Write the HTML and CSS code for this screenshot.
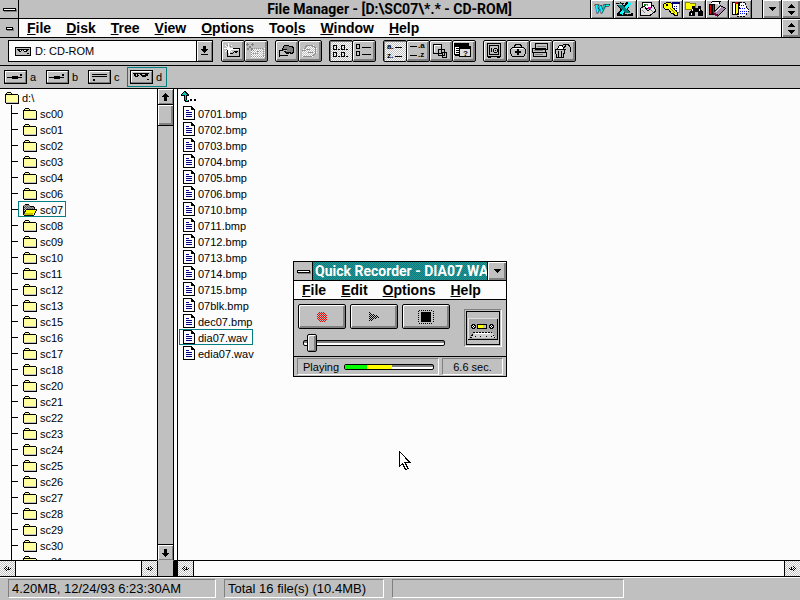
FILE: index.html
```html
<!DOCTYPE html>
<html lang="en">
<head>
<meta charset="utf-8">
<title>File Manager</title>
<link rel="stylesheet" href="styles.css">
</head>
<body>
<svg class="sprites" width="0" height="0" aria-hidden="true">
  <defs>
    <pattern id="p-dark" width="2" height="2" patternUnits="userSpaceOnUse"><path d="M0 0h1v1H0zM1 1h1v1H1z"/></pattern>
    <pattern id="p-red" width="2" height="2" patternUnits="userSpaceOnUse"><path fill="#f00" d="M0 0h1v1H0zM1 1h1v1H1z"/></pattern>
    <pattern id="p-light" width="2" height="2" patternUnits="userSpaceOnUse"><path fill="#fff" d="M0 0h1v1H0zM1 1h1v1H1z"/></pattern>
  </defs>
  <symbol id="folder" viewBox="0 0 14 12">
    <path fill="#ffffa0" d="M1 3h1V1h5v2h6v8H1z"/>
    <path fill="#c0c0c0" d="M1 10h12v1H1z"/>
    <path d="M2 0h4v1H2zM1 1h1v1H1zM6 1h1v1H6zM0 2h13v1H0zM0 3h1v8H0zM13 3h1v9h-1zM1 11h12v1H1z"/>
  </symbol>
  <symbol id="folder-open" viewBox="0 0 15 12">
    <path fill="#fff" d="M1 1h5l1 1h5v5H1z"/>
    <path fill="url(#p-dark)" d="M0 1h7v1h5v4H4l-3 5H0z"/>
    <path d="M2 0h4v1H2zM0 2h1v9H0zM7 2h5v1H7zM12 3h1v2h-1z"/>
    <path fill="#ff0" d="M4 6h10l-3 5H1z"/>
    <path fill="#c0c000" d="M2 9h9v2H1z"/>
    <path fill="none" stroke="#000" d="M.5 10.500l3-5h11l-3 6H1"/>
  </symbol>
  <symbol id="doc" viewBox="0 0 12 14">
    <path fill="#fff" stroke="#000" d="M.5.5h8l3 3v10H.5z"/>
    <path d="M8 0h1v1h1v1h1v1h1v1H8zM11 3h1v11h-1zM0 13h12v1H0z"/>
    <path fill="#000080" d="M3 4h3v1H3zM3 6h6v1H3zM3 8h6v1H3zM3 10h6v1H3z"/>
  </symbol>
  <symbol id="arrow-down" viewBox="0 0 7 8"><path d="M2 0h3v4h2v1H6v1H5v1H4v1H3V7H2V6H1V5H0V4h2z"/></symbol>
  <symbol id="arrow-up" viewBox="0 0 7 8"><path d="M2 8h3V4h2V3H6V2H5V1H4V0H3v1H2v1H1v1H0v1h2z"/></symbol>
  <symbol id="arrow-left" viewBox="0 0 7 6"><path fill="url(#p-dark)" d="M0 3l3-3v2h4v2H3v2z"/><path d="M0 2h1v1H0zM1 1h1v1H1zM2 0h1v1H2zM1 3h1v1H1zM2 4h1v1H2zM4 1h1v1H4zM4 3h1v1H4z"/></symbol>
  <symbol id="tri-down" viewBox="0 0 7 4"><path d="M0 0h7v1H6v1H5v1H4v1H3V3H2V2H1V1H0z"/></symbol>
  <symbol id="restore" viewBox="0 0 7 11"><path d="M3 0h1v1h1v1h1v1h1v1H0V3h1V2h1V1h1zM0 7h7v1H6v1H5v1H4v1H3v-1H2V9H1V8H0z"/></symbol>
  <symbol id="cd" viewBox="0 0 16 9">
    <path fill="#c0c0c0" stroke="#000" d="M.5.5h15v8H.5z"/>
    <path d="M2 2h12v1h-1v1h-1v1H9V4H8V3H7v1H6v1H4V4H3V3H2zM12 6h2v1h-2z"/>
    <path fill="#fff" d="M5 3h1v1H5zM9 3h2v1H9z"/>
  </symbol>
  <symbol id="drive-frame" viewBox="0 0 24 14"><path fill="#c0c0c0" stroke="#000" d="M.5.5h22v13H.5z"/><path fill="#fff" d="M1 1h20v1H2v10H1z"/><path fill="#808080" d="M21 2h1v11H1v-1h20z"/></symbol>
</svg>

<header class="titlebar">
  <button class="sysbox" aria-label="Control menu"><i class="bar"></i></button>
  <h1>File Manager - [D:\SC07\*.* - CD-ROM]</h1>
  <div class="launcher">
    <button aria-label="Word"><svg width="20" height="16" viewBox="0 0 20 16"><text class="logo-w" x="2" y="12">W</text><path fill="#0ff" stroke="#000" stroke-width=".5" d="M13 3h5l-1 2h-4z"/></svg></button>
    <button aria-label="Excel"><svg width="20" height="16" viewBox="0 0 20 16"><path fill="none" stroke="#000" stroke-width="5" d="M14 2L5 13M4 3l10 10"/><path d="M1 2h8v1H1zM2 12h16v3H2z"/><path fill="none" stroke="#0ff" stroke-width="3" d="M15 2L6 13"/><path fill="none" stroke="#008080" stroke-width="3" d="M4 3l10 10"/><path stroke="#c0c0c0" d="M3 3.500h4M10 12.500h6"/></svg></button>
    <button aria-label="Mail"><svg width="20" height="16" viewBox="0 0 20 16"><path fill="#fff" stroke="#000" d="M4.500 1.500h9v6h-9z"/><path fill="#e0e0e0" stroke="#000" d="M2 8l4-3 4 5 5-6 3 6-7 5-5-1-4 1z"/><path fill="none" stroke="#808080" d="M4 9l3 3M12 8l3 3M7 3h2v2"/><path fill="#c0a" d="M10 6h3v2h-3z"/><path fill="#080" d="M6 3h2v2H6z"/></svg></button>
    <button aria-label="Security"><svg width="20" height="16" viewBox="0 0 20 16"><path fill="#fff" stroke="#808080" d="M11.500 2.500h7v9h-7z"/><path fill="#000080" d="M11 1h8v2h-8z"/><path stroke="#008" stroke-dasharray="1 1" d="M13 5h4M13 7h4M13 9h4"/><path fill="#ff0" stroke="#000" d="M2.500 3.500l3-2h4l2 2v3l5 5v3h-3l-1-2h-2l-3-4h-3l-2-2z"/><path d="M5 3h2v2H5z"/><path stroke="#880" d="M9 7l5 5"/></svg></button>
    <button aria-label="Find file"><svg width="20" height="16" viewBox="0 0 20 16"><path fill="#ff0" stroke="#880" d="M1.500 8.500v-7h4l1 1h5v6z"/><path d="M8 5h3v2h3V5h3v3l2 3v4h-5v-4h-3v4H5v-4l3-3z"/><path fill="#fff" d="M8 8h1v2H8zM15 8h1v2h-1zM7 12h1v2H7z"/></svg></button>
    <button aria-label="Library"><svg width="20" height="16" viewBox="0 0 20 16"><path fill="#fff" stroke="#000" d="M3.500 2.500l2-2h8l-2 3"/><path fill="#d00" stroke="#000" d="M2.500 3.500h2v10h-2z"/><path fill="#080" stroke="#000" d="M5.500 3.500h2v10h-2z"/><path fill="#a8a" stroke="#000" d="M6.500 11.500l7-7 5 3-7 7z"/><path stroke="#fff" d="M9 11l5-5"/><path stroke="#804" stroke-width="2" d="M6 12l5 3"/></svg></button>
    <button aria-label="Notes"><svg width="20" height="16" viewBox="0 0 20 16"><path fill="#fff" stroke="#000" d="M2.500 1.500h7v12h-7z"/><path fill="#ff0" stroke="#000" d="M5.500 1.500h3v11l-2 1-1-1z"/><path fill="#d00" d="M5 1h3v2H5z"/><path fill="#fff" stroke="#000" stroke-dasharray="2 1" d="M10 2l5-1 1 4 3 5-4 5H8l1-6z"/><path stroke="#00f" stroke-dasharray="1 1" d="M11 4h4M10 7h6M10 10h7M10 12h5"/></svg></button>
  </div>
  <div class="winbuttons">
    <button class="winbtn" aria-label="Minimize"><svg width="7" height="4"><use href="#tri-down"/></svg></button>
    <button class="winbtn" aria-label="Restore"><svg width="7" height="11"><use href="#restore"/></svg></button>
  </div>
</header>

<nav class="menubar">
  <button class="sysbox" aria-label="Document control menu"><i class="bar short"></i></button>
  <ul class="menu">
    <li><a href="#"><u>F</u>ile</a></li><li><a href="#"><u>D</u>isk</a></li><li><a href="#"><u>T</u>ree</a></li><li><a href="#"><u>V</u>iew</a></li><li><a href="#"><u>O</u>ptions</a></li><li><a href="#">Too<u>l</u>s</a></li><li><a href="#"><u>W</u>indow</a></li><li><a href="#"><u>H</u>elp</a></li>
  </ul>
  <button class="winbtn" aria-label="Restore document"><svg width="7" height="11"><use href="#restore"/></svg></button>
</nav>

<div class="toolbar">
  <div class="drive-select">
    <svg width="16" height="9" aria-hidden="true"><use href="#cd"/></svg>
    <select aria-label="Drive"><option>D: CD-ROM</option></select>
    <span class="drop"><svg width="7" height="10" viewBox="0 0 7 10"><path d="M2 0h3v3h2v1H6v1H5v1H4v1H3V6H2V5H1V4H0V3h2zM0 8h7v1H0z"/></svg></span>
  </div>
  <div class="group">
    <button aria-label="Connect network drive"><svg viewBox="1 1 22 20"><path fill="#c0c0c0" stroke="#000" d="M6.500 8.500h12v8h-12z"/><path d="M7 16h12v1H7zM18 9h1v8h-1z"/><path fill="none" stroke="#fff" d="M8 15V9.500h10"/><path d="M9 13h3v1H9zM12 12h1v1h-1zM13 11h4v1h-4zM14 12h2v1h-2z"/><path stroke="#fff" d="M7.500 3v10M3 8.500h9M4 5l7 7M11 5l-7 7"/><path fill="#808080" d="M6 5h1v1H6zM9 6h1v1H9zM5 9h1v1H5z"/></svg></button>
    <button aria-label="Disconnect network drive"><svg viewBox="1 1 22 20"><path fill="url(#p-light)" d="M7 8h14v10H7z"/><path fill="none" stroke="#909090" stroke-dasharray="1 1" d="M7.500 8.500h12v8h-12zM9 13.500h4l1-2h4"/><path stroke="#808080" stroke-width="2" stroke-dasharray="2 1" d="M3 4l7 7M9 4L3 10"/></svg></button>
  </div>
  <div class="group">
    <button aria-label="Share directory"><svg viewBox="1 1 22 20"><path fill="#808080" stroke="#000" d="M7.500 8.500l2-3h4l1 1h3l1 2v4l-2 1h-8z"/><path fill="#c0c0c0" d="M4 11h4l2-2h2v2h-1v1h4v2h-3v2H4z"/><path fill="none" stroke="#000" d="M4 10.500h4M8 9.500h4M11 11.500h-2M10 12.500h6M14 13.500h-3M5 15.500h8"/><path d="M4 11h1v6H4z"/></svg></button>
    <button aria-label="Stop sharing"><svg viewBox="1 1 22 20"><path fill="url(#p-light)" d="M4 11l4-6h7l4 4v5l-4 3H4z"/><path fill="none" stroke="#909090" d="M6.500 9.500l2-4h5l4 2v6l-4 3h-9M4 10.500h4M8 9.500h4M10 12.500h5"/></svg></button>
  </div>
  <div class="group">
    <button class="on" aria-label="View name" aria-pressed="true"><svg viewBox="1 1 22 20"><path fill="none" stroke="#000" d="M4.500 5.500h3v4h-3zM4.500 12.500h3v4h-3zM12.500 5.500h3v4h-3zM12.500 12.500h3v4h-3zM9 9.500h2M17 9.500h2M9 16.500h2M17 16.500h2"/></svg></button>
    <button aria-label="View all details"><svg viewBox="1 1 22 20"><path fill="none" stroke="#000" d="M4.500 4.500h3v4h-3zM4.500 11.500h3v4h-3zM10 7.500h9M10 14.500h9"/></svg></button>
  </div>
  <div class="group">
    <button class="on" aria-label="Sort by name" aria-pressed="true"><svg viewBox="1 1 22 20"><text x="4" y="9">a.</text><text x="4" y="18">z.</text><path stroke="#000" d="M12 7.500h7M12 16.500h7"/></svg></button>
    <button aria-label="Sort by type"><svg viewBox="1 1 22 20"><text x="12" y="8">.a</text><text x="12" y="17">.z</text><path stroke="#000" d="M4 6.500h7M4 15.500h7"/></svg></button>
    <button aria-label="Sort by size"><svg viewBox="1 1 22 20"><g fill="#c0c0c0" stroke="#000"><path d="M4.500 4.500h8v9h-8zM9.500 9.500h6v6h-6zM13.500 12.500h4v5h-4z"/></g><path fill="none" stroke="#fff" d="M5.500 12V5.500H12"/></svg></button>
    <button aria-label="Sort by date"><svg viewBox="1 1 22 20"><path fill="#fff" stroke="#000" d="M2.500 4.500h14v10h-14z"/><path d="M2 3h15v4H2zM4 8h3v1H4zM4 10h3v1H4zM4 12h3v1H4zM3 14h5v2H3z"/><path fill="#e0e0e0" stroke="#000" d="M7.500 6.500h11v10h-11z"/><path d="M7 6h12v3H7z"/><text x="11" y="16">?</text></svg></button>
  </div>
  <div class="group">
    <button aria-label="Backup"><svg viewBox="1 1 22 20"><g fill="none" stroke="#000"><path d="M4.500 3.500h13v13h-13zM6.500 5.500h9v9h-9zM5 17.500h3M14 17.500h3"/><path d="M8.500 8v4M11 8.500h3M11 12.500h3M10.500 9v3M14.500 9v3M12 10.500h1"/></g></svg></button>
    <button aria-label="Anti-virus"><svg viewBox="1 1 22 20"><path fill="none" stroke="#000" d="M8.500 7V5.500h1v-1h5v1h1V7M6 7.500h12M5.500 8v1M18.500 8v1M4.500 9v5M19.500 9v5M5.500 14v2M18.500 14v2M6 16.500h12"/><path fill="#fff" d="M7 8h10v1H7z"/><path d="M11 9h2v2h2v2h-2v2h-2v-2H9v-2h2z"/></svg></button>
    <button aria-label="Undelete"><svg viewBox="1 1 22 20"><g fill="#c0c0c0" stroke="#000"><path d="M6.500 3.500h12v6h-12zM3.500 8.500h13v4h-13zM4.500 12.500h13v4h-13z"/></g><path fill="none" stroke="#808080" d="M8 6.500h9M5 10.500h9M6 14.500h8"/></svg></button>
    <button aria-label="Recover"><svg viewBox="1 1 22 20"><path fill="#fff" stroke="#000" d="M5.500 9l2-4h3l1 4"/><path fill="#c0c0c0" stroke="#000" d="M3.500 9.500h9l-1 8h-7z"/><path fill="none" stroke="#000" d="M3 9.500h11M6.500 11v6M9.500 11v6M12 8l3-4h1l2 3v5M11 4.500h3"/></svg></button>
  </div>
</div>

<div class="drives">
  <button class="drive"><svg width="24" height="14" viewBox="0 0 24 14"><use href="#drive-frame"/><path d="M3 7h15v1H3zM8 6h6v3H8zM16 4h2v2h-2z"/></svg>a</button>
  <button class="drive"><svg width="24" height="14" viewBox="0 0 24 14"><use href="#drive-frame"/><path d="M3 7h15v1H3zM8 6h6v3H8zM16 4h2v2h-2z"/></svg>b</button>
  <button class="drive"><svg width="24" height="14" viewBox="0 0 24 14"><use href="#drive-frame"/><path d="M4 4h15v1H4zM4 6h15v1H4zM5 9h2v2H5z"/></svg>c</button>
  <button class="drive selected"><svg width="24" height="14" viewBox="0 0 24 14"><use href="#drive-frame"/><path d="M3 3h16v1h-1v2h-2v1h-4V6h-1V5H9v1H8v1H5V6H4V4H3zM17 9h2v1h-2z"/><path fill="#c0c0c0" d="M6 4h1v2H6zM8 4h2v1H8zM12 4h3v1h-3z"/></svg>d</button>
</div>

<main class="panes">
  <section class="pane tree-pane" aria-label="Directory tree">
    <div class="tree">
      <a class="item root" href="#"><svg width="14" height="12"><use href="#folder"/></svg>d:\</a>
      <ul>
        <li><a class="item" href="#"><svg width="14" height="12"><use href="#folder"/></svg>sc00</a></li>
        <li><a class="item" href="#"><svg width="14" height="12"><use href="#folder"/></svg>sc01</a></li>
        <li><a class="item" href="#"><svg width="14" height="12"><use href="#folder"/></svg>sc02</a></li>
        <li><a class="item" href="#"><svg width="14" height="12"><use href="#folder"/></svg>sc03</a></li>
        <li><a class="item" href="#"><svg width="14" height="12"><use href="#folder"/></svg>sc04</a></li>
        <li><a class="item" href="#"><svg width="14" height="12"><use href="#folder"/></svg>sc06</a></li>
        <li><a class="item selected" href="#"><svg width="14" height="12"><use href="#folder-open"/></svg>sc07</a></li>
        <li><a class="item" href="#"><svg width="14" height="12"><use href="#folder"/></svg>sc08</a></li>
        <li><a class="item" href="#"><svg width="14" height="12"><use href="#folder"/></svg>sc09</a></li>
        <li><a class="item" href="#"><svg width="14" height="12"><use href="#folder"/></svg>sc10</a></li>
        <li><a class="item" href="#"><svg width="14" height="12"><use href="#folder"/></svg>sc11</a></li>
        <li><a class="item" href="#"><svg width="14" height="12"><use href="#folder"/></svg>sc12</a></li>
        <li><a class="item" href="#"><svg width="14" height="12"><use href="#folder"/></svg>sc13</a></li>
        <li><a class="item" href="#"><svg width="14" height="12"><use href="#folder"/></svg>sc15</a></li>
        <li><a class="item" href="#"><svg width="14" height="12"><use href="#folder"/></svg>sc16</a></li>
        <li><a class="item" href="#"><svg width="14" height="12"><use href="#folder"/></svg>sc17</a></li>
        <li><a class="item" href="#"><svg width="14" height="12"><use href="#folder"/></svg>sc18</a></li>
        <li><a class="item" href="#"><svg width="14" height="12"><use href="#folder"/></svg>sc20</a></li>
        <li><a class="item" href="#"><svg width="14" height="12"><use href="#folder"/></svg>sc21</a></li>
        <li><a class="item" href="#"><svg width="14" height="12"><use href="#folder"/></svg>sc22</a></li>
        <li><a class="item" href="#"><svg width="14" height="12"><use href="#folder"/></svg>sc23</a></li>
        <li><a class="item" href="#"><svg width="14" height="12"><use href="#folder"/></svg>sc24</a></li>
        <li><a class="item" href="#"><svg width="14" height="12"><use href="#folder"/></svg>sc25</a></li>
        <li><a class="item" href="#"><svg width="14" height="12"><use href="#folder"/></svg>sc26</a></li>
        <li><a class="item" href="#"><svg width="14" height="12"><use href="#folder"/></svg>sc27</a></li>
        <li><a class="item" href="#"><svg width="14" height="12"><use href="#folder"/></svg>sc28</a></li>
        <li><a class="item" href="#"><svg width="14" height="12"><use href="#folder"/></svg>sc29</a></li>
        <li><a class="item" href="#"><svg width="14" height="12"><use href="#folder"/></svg>sc30</a></li>
        <li><a class="item" href="#"><svg width="14" height="12"><use href="#folder"/></svg>sc31</a></li>
      </ul>
    </div>
    <div class="vscroll">
      <button aria-label="Scroll up"><svg width="7" height="8"><use href="#arrow-up"/></svg></button>
      <span class="thumb"></span>
      <button class="end" aria-label="Scroll down"><svg width="7" height="8"><use href="#arrow-down"/></svg></button>
    </div>
    <div class="hscroll">
      <button aria-label="Scroll tree left"><svg width="7" height="6"><use href="#arrow-left"/></svg></button>
      <button aria-label="Scroll tree right"><svg class="flip" width="7" height="6"><use href="#arrow-left"/></svg></button>
    </div>
    <div class="corner"></div>
  </section>
  <div class="splitter"></div>
  <section class="pane file-pane" aria-label="Files">
    <ul class="files">
      <li><a class="item up" href="#" aria-label="Parent directory"><svg width="16" height="12" viewBox="0 0 16 12"><path d="M3 0h2v1h1v1h1v1h1v2H6v4h2v2H4v-1H3V5H0V3h1V2h1V1h1z"/><path fill="#0cc" d="M3 1h1v1h1v1h1v1H5v5h2v1H5V9H4V4H1V3h1V2h1z"/><path d="M9 8h2v2H9zM13 8h2v2h-2z"/></svg></a></li>
      <li><a class="item" href="#"><svg width="12" height="14"><use href="#doc"/></svg>0701.bmp</a></li>
      <li><a class="item" href="#"><svg width="12" height="14"><use href="#doc"/></svg>0702.bmp</a></li>
      <li><a class="item" href="#"><svg width="12" height="14"><use href="#doc"/></svg>0703.bmp</a></li>
      <li><a class="item" href="#"><svg width="12" height="14"><use href="#doc"/></svg>0704.bmp</a></li>
      <li><a class="item" href="#"><svg width="12" height="14"><use href="#doc"/></svg>0705.bmp</a></li>
      <li><a class="item" href="#"><svg width="12" height="14"><use href="#doc"/></svg>0706.bmp</a></li>
      <li><a class="item" href="#"><svg width="12" height="14"><use href="#doc"/></svg>0710.bmp</a></li>
      <li><a class="item" href="#"><svg width="12" height="14"><use href="#doc"/></svg>0711.bmp</a></li>
      <li><a class="item" href="#"><svg width="12" height="14"><use href="#doc"/></svg>0712.bmp</a></li>
      <li><a class="item" href="#"><svg width="12" height="14"><use href="#doc"/></svg>0713.bmp</a></li>
      <li><a class="item" href="#"><svg width="12" height="14"><use href="#doc"/></svg>0714.bmp</a></li>
      <li><a class="item" href="#"><svg width="12" height="14"><use href="#doc"/></svg>0715.bmp</a></li>
      <li><a class="item" href="#"><svg width="12" height="14"><use href="#doc"/></svg>07blk.bmp</a></li>
      <li><a class="item" href="#"><svg width="12" height="14"><use href="#doc"/></svg>dec07.bmp</a></li>
      <li><a class="item selected" href="#"><svg width="12" height="14"><use href="#doc"/></svg>dia07.wav</a></li>
      <li><a class="item" href="#"><svg width="12" height="14"><use href="#doc"/></svg>edia07.wav</a></li>
    </ul>
    <div class="hscroll">
      <button aria-label="Scroll files left"><svg width="7" height="6"><use href="#arrow-left"/></svg></button>
      <button aria-label="Scroll files right"><svg class="flip" width="7" height="6"><use href="#arrow-left"/></svg></button>
    </div>
  </section>
</main>

<footer class="status">
  <p class="well">4.20MB, 12/24/93 6:23:30AM</p>
  <p class="well">Total 16 file(s) (10.4MB)</p>
  <p class="well"></p>
</footer>

<section class="recorder" role="dialog" aria-labelledby="rec-title">
  <header class="rec-title">
    <button class="sysbox" aria-label="Recorder control menu"><i class="bar"></i></button>
    <h2 id="rec-title">Quick Recorder - DIA07.WAV</h2>
    <button class="winbtn" aria-label="Minimize recorder"><svg width="7" height="4"><use href="#tri-down"/></svg></button>
  </header>
  <ul class="menu rec-menu">
    <li><a href="#"><u>F</u>ile</a></li><li><a href="#"><u>E</u>dit</a></li><li><a href="#"><u>O</u>ptions</a></li><li><a href="#"><u>H</u>elp</a></li>
  </ul>
  <div class="rec-body">
    <div class="deck">
      <div class="keys">
        <button aria-label="Record"><svg width="16" height="16" viewBox="0 0 16 16"><circle cx="8" cy="8" r="5.500" fill="url(#p-red)"/></svg></button>
        <button aria-label="Play"><svg width="16" height="16" viewBox="0 0 16 16"><path fill="url(#p-dark)" d="M3 3l11 5L3 13z"/></svg></button>
        <button aria-label="Stop"><svg width="16" height="16" viewBox="0 0 16 16"><path d="M3 3h10v10H3z"/><path fill="none" stroke="#000" stroke-dasharray="1 1" d="M.5 2v12M15.500 2v12M1 1.500h14M1 14.500h14"/></svg></button>
      </div>
      <input class="seek" type="range" min="0" max="100" value="2" aria-label="Position">
    </div>
    <div class="tape"><svg width="34" height="34" viewBox="0 0 34 34">
      <path fill="#c0c0c0" stroke="#000" d="M.5.5h33v33H.5z"/>
      <path fill="#a8a8a8" d="M2 8h30v21H2z"/><path fill="#e0e0e0" d="M2 7h29v1H3v20H2z"/><path d="M31 8h1v21H2v-1h29z"/>
      <path d="M6 13h3v1h1v3H9v1H6v-1H5v-3h1zM24 13h3v1h1v3h-1v1h-3v-1h-1v-3h1z"/>
      <path fill="#fff" d="M7 14h1v1H7zM6 15h1v1H6zM8 15h1v1H8zM7 16h1v1H7zM25 14h1v1h-1zM24 15h1v1h-1zM26 15h1v1h-1zM25 16h1v1h-1z"/>
      <path fill="#c0c0c0" stroke="#000" d="M11.500 13.500h9v4h-9z"/><path fill="#ff0" d="M12 14h5v3h-5z"/>
      <path fill="#d0d0d0" d="M4 27l4-6h18l4 6z"/><path fill="none" stroke="#000" stroke-dasharray="2 1" d="M4.500 27.500l3-6h18l4 6"/><path fill="#fff" d="M9 22h15v1H9z"/><path d="M9 25h1v1H9zM14 25h1v1h-1zM20 25h1v1h-1zM25 25h1v1h-1z"/>
    </svg></div>
  </div>
  <footer class="rec-status">
    <p class="well grow">Playing <span class="meter"><i class="green"></i><i class="yellow"></i></span></p>
    <p class="well time">6.6 sec.</p>
  </footer>
</section>

<svg class="cursor" width="12" height="20" viewBox="0 0 12 20" aria-hidden="true"><path fill="#fff" stroke="#000" d="M.5.5v15l3-3 3 6 2.500-1-3-6h5z"/></svg>
</body>
</html>
```
FILE: styles.css
```css
* { box-sizing: border-box; }

:root {
  --face: #c0c0c0;
  --paper: #fcfcfc;
  --teal: #008080;
  --dither: repeating-conic-gradient(#c0c0c0 0 25%, #fff 0 50%) 0 0 / 2px 2px;
}

body {
  margin: 0;
  height: 100vh;
  display: flex;
  flex-direction: column;
  overflow: hidden;
  background: var(--face);
  color: #000;
  font: 11px/16px "Liberation Sans", Arial, sans-serif;
  cursor: default;
}

h1, h2, p, ul { margin: 0; padding: 0; }
ul { list-style: none; }
a { color: inherit; text-decoration: none; }
svg { display: block; flex: none; shape-rendering: crispEdges; }
.sprites { position: absolute; }

button {
  margin: 0;
  padding: 0;
  border: 0;
  border-radius: 0;
  background: var(--face);
  color: inherit;
  font: inherit;
  display: flex;
  align-items: center;
  justify-content: center;
  flex: none;
}

/* Title and menu bars */
.titlebar, .menubar {
  display: flex;
  flex: none;
  height: 19px;
  border-bottom: 1px solid #000;
}
.titlebar h1 {
  flex: 1;
  padding-left: 170px;
  text-align: center;
  white-space: nowrap;
}
h1, h2, .menu { font-size: 14px; line-height: 18px; font-weight: bold; }
h1, h2 { font-family: Roboto, "Liberation Sans", sans-serif; }

.sysbox { width: 19px; border-right: 1px solid #000; }
.bar {
  width: 13px;
  height: 3px;
  border: 1px solid #000;
  background: #fff;
  box-shadow: 1px 1px #808080;
}
.bar.short { width: 7px; }

.launcher { display: flex; margin-right: 10px; border-right: 1px solid #000; }
.launcher button {
  width: 23px;
  border-left: 1px solid #000;
  box-shadow: inset 1px 1px #fff, inset -1px -1px #808080;
}
.logo-w {
  font: italic bold 13px "Liberation Serif", serif;
  fill: #0ff;
  stroke: #000;
  stroke-width: 1px;
  paint-order: stroke;
}
.winbuttons { display: flex; }
.winbtn {
  width: 19px;
  border-left: 1px solid #000;
  box-shadow: inset 1px 1px #fff, inset -2px -2px #808080;
}

.menubar { background: var(--paper); }
.menu { display: flex; flex: 1; gap: 15px; padding-left: 8px; }

/* Toolbar */
.toolbar {
  display: flex;
  flex: none;
  gap: 7px;
  height: 28px;
  padding: 2px 8px;
  border-bottom: 1px solid #000;
}
.drive-select {
  display: flex;
  align-items: center;
  width: 205px;
  height: 22px;
  margin-right: 1px;
  padding-left: 6px;
  border: 1px solid #000;
  background: var(--paper);
}
.drive-select select {
  appearance: none;
  flex: 1;
  min-width: 0;
  padding: 0 4px;
  border: 0;
  background: none;
  color: #000;
  font: inherit;
}
.drop {
  display: flex;
  align-items: center;
  justify-content: center;
  width: 16px;
  height: 20px;
  border-left: 1px solid #000;
  background: var(--face);
  box-shadow: inset 1px 1px #fff, inset -1px -1px #808080;
}
.group { display: flex; }
.group button {
  width: 24px;
  height: 22px;
  border: 1px solid #000;
  border-radius: 2px;
  box-shadow: inset 1px 1px #fff, inset -2px -2px #808080;
}
.group button + button { margin-left: -1px; }
.group .on { background: var(--dither); box-shadow: inset 1px 1px #808080; }
.group svg { width: 22px; height: 20px; }
.group text { font: bold 8px "Liberation Sans", sans-serif; }

/* Drive bar */
.drives {
  display: flex;
  flex: none;
  gap: 2px;
  height: 23px;
  padding: 1px;
  border-bottom: 1px solid #000;
}
.drive {
  width: 40px;
  height: 20px;
  gap: 2px;
  justify-content: flex-start;
  padding-left: 2px;
  border: 1px solid transparent;
}
.drive.selected { border-color: var(--teal); }

/* Directory and file panes */
.panes { display: flex; flex: 1; min-height: 0; background: var(--paper); }
.pane { display: grid; grid-template-rows: minmax(0, 1fr) 17px; min-width: 0; }
.tree-pane { grid-template-columns: minmax(0, 1fr) 17px; flex: 0 0 174px; }
.file-pane { flex: 1; }
.tree, .files { overflow: hidden; }

.item {
  display: flex;
  align-items: center;
  gap: 3px;
  height: 16px;
  padding: 2px 3px 0;
  border: 1px solid transparent;
  white-space: nowrap;
}
.item.selected { border-color: var(--teal); }
.root { padding-left: 4px; }
.tree ul { margin-left: 11px; border-left: 1px solid #000; }
.tree li { display: flex; align-items: center; }
.tree li::before { content: ""; width: 6px; height: 1px; background: #000; }
.tree li .item { padding: 2px 2px 0 4px; }
.files { padding-left: 1px; }
.files li { display: flex; }
.files .item { padding-right: 4px; }
.files .item svg { margin-bottom: 2px; }
.files .up { padding-left: 1px; }

.splitter {
  width: 4px;
  border-right: 1px solid #000;
  background: linear-gradient(#000, #000) bottom / 100% 17px no-repeat;
}

.vscroll {
  display: flex;
  flex-direction: column;
  border: solid #000;
  border-width: 0 1px;
  background: var(--face);
}
.vscroll button {
  height: 16px;
  border-bottom: 1px solid #000;
  box-shadow: inset 1px 1px #fff, inset -1px -1px #808080;
}
.vscroll .end { margin-top: auto; border-bottom: 0; border-top: 1px solid #000; }
.thumb {
  height: 21px;
  border-bottom: 1px solid #000;
  box-shadow: inset 1px 1px #fff, inset -2px -2px #808080;
}
.hscroll {
  display: flex;
  justify-content: space-between;
  border: solid #000;
  border-width: 1px 0;
}
.hscroll button { width: 16px; border-right: 1px solid #000; background: var(--dither); }
.hscroll button + button { border-right: 0; border-left: 1px solid #000; }
.flip { transform: scaleX(-1); }
.corner { border: 1px solid #000; border-top-color: var(--face); background: var(--face); }

/* Status bar */
.well {
  border: 1px solid;
  border-color: #808080 #fff #fff #808080;
  white-space: nowrap;
}
.status {
  display: flex;
  flex: none;
  gap: 8px;
  height: 23px;
  padding: 1px 8px;
  border-top: 1px solid #fff;
  font-size: 13px;
}
.status .well { width: 208px; height: 19px; padding-left: 3px; line-height: 18px; }
.status .well:nth-child(2) { width: 160px; }
.status .well:nth-child(3) { width: 232px; }

/* Floating recorder window */
.recorder {
  position: absolute;
  left: 293px;
  top: 261px;
  width: 214px;
  border: 1px solid #000;
  background: var(--face);
}
.rec-title { display: flex; height: 19px; border-bottom: 1px solid #000; }
.rec-title h2 {
  flex: 1;
  min-width: 0;
  overflow: hidden;
  padding-left: 2px;
  background: repeating-conic-gradient(#008080 0 25%, #309090 0 50%) 0 0 / 2px 2px;
  color: #fff;
  white-space: nowrap;
}
.rec-menu { height: 19px; border-bottom: 1px solid #000; background: var(--paper); }
.rec-body { display: flex; justify-content: space-between; height: 56px; padding: 4px; }
.deck { width: 152px; }
.keys { display: flex; gap: 4px; }
.keys button {
  width: 48px;
  height: 25px;
  border: 1px solid #000;
  border-radius: 2px;
  box-shadow: inset 1px 1px #fff, inset -2px -2px #808080;
}
.seek {
  appearance: none;
  display: block;
  width: 142px;
  height: 18px;
  margin: 5px;
  background: none;
}
.seek::-webkit-slider-runnable-track {
  height: 6px;
  border: 1px solid #000;
  border-radius: 2px;
  background: linear-gradient(#808080 50%, #fff 50%);
}
.seek::-webkit-slider-thumb {
  appearance: none;
  width: 10px;
  height: 18px;
  margin-top: -7px;
  border: 1px solid #000;
  border-radius: 2px;
  background: var(--face);
  box-shadow: inset 1px 1px #fff, inset -2px -1px #808080;
}
.tape {
  width: 38px;
  height: 38px;
  margin-top: 5px;
  padding: 1px;
  border: 1px solid;
  border-color: #808080 #fff #fff #808080;
}
.rec-status {
  display: flex;
  gap: 3px;
  height: 20px;
  padding: 1px 3px;
  border-top: 1px solid #000;
}
.grow { display: flex; flex: 1; align-items: center; gap: 5px; padding-left: 5px; }
.time { width: 61px; text-align: center; }
.meter {
  display: flex;
  width: 90px;
  height: 6px;
  border: 1px solid #000;
  border-radius: 2px;
  background: linear-gradient(#808080 50%, #fff 50%);
}
.green { width: 22px; background: #0f0; }
.yellow { width: 25px; background: #ff0; }

.cursor { position: absolute; left: 399px; top: 451px; }
```
